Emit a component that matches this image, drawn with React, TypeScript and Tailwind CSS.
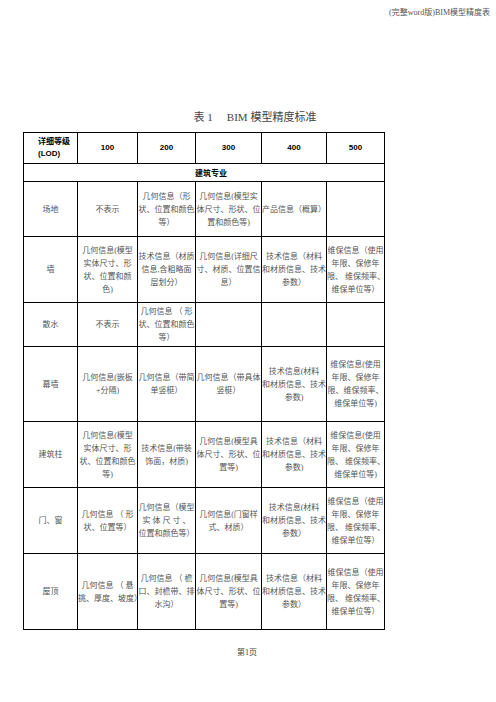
const cols = [54, 60, 58, 66, 65, 58];

const rows: { h: number; cells: string[][] }[] = [
  {
    h: 55,
    cells: [
      ["场地"],
      ["不表示"],
      ["几何信息（形", "状、位置和颜色", "等）"],
      ["几何信息(模型实", "体尺寸、形状、位", "置和颜色等)"],
      ["产品信息（概算）"],
      [],
    ],
  },
  {
    h: 66,
    cells: [
      ["墙"],
      ["几何信息(模型", "实体尺寸、形", "状、位置和颜", "色)"],
      ["技术信息（材质", "信息,含粗略面", "层划分）"],
      ["几何信息(详细尺", "寸、材质、位置信", "息）"],
      ["技术信息（材料", "和材质信息、技术", "参数）"],
      ["维保信息（使用", "年限、保修年", "限、 维保频率、", "维保单位等）"],
    ],
  },
  {
    h: 44,
    cells: [["散水"], ["不表示"], ["几何信息 （ 形", "状、位置和颜色", "等）"], [], [], []],
  },
  {
    h: 75,
    cells: [
      ["幕墙"],
      ["几何信息(嵌板", "+分隔)"],
      ["几何信息（带简", "单竖梃）"],
      ["几何信息（带具体", "竖梃）"],
      ["技术信息(材料", "和材质信息、技术", "参数)"],
      ["维保信息(使用", "年限、保修年", "限、维保频率、", "维保单位等)"],
    ],
  },
  {
    h: 66,
    cells: [
      ["建筑柱"],
      ["几何信息(模型", "实体尺寸、形", "状、位置和颜色", "等)"],
      ["技术信息(带装", "饰面，材质)"],
      ["几何信息(模型具", "体尺寸、形状、位", "置等)"],
      ["技术信息（材料", "和材质信息、技术", "参数)"],
      ["维保信息(使用", "年限、保修年", "限、 维保频率、", "维保单位等)"],
    ],
  },
  {
    h: 66,
    cells: [
      ["门、窗"],
      ["几何信息 （ 形", "状、位置等）"],
      ["几何信息（模型", "实 体 尺 寸 、", "位置和颜色等）"],
      ["几何信息(门窗样", "式、材质）"],
      ["技术信息(材料", "和材质信息、技术", "参数）"],
      ["维保信息（使用", "年限、保修年", "限、 维保频率、", "维保单位等）"],
    ],
  },
  {
    h: 76,
    cells: [
      ["屋顶"],
      ["几何信息 （ 悬", "挑、厚度、坡度）"],
      ["几何信息 （ 檐", "口、封檐带、排", "水沟）"],
      ["几何信息(模型具", "体尺寸、形状、位", "置等)"],
      ["技术信息（材料", "和材质信息、技术", "参数）"],
      ["维保信息（使用", "年限、保修年", "限、 维保频率、", "维保单位等）"],
    ],
  },
];

const cjk = "font-['Liberation_Serif','Noto_Sans_CJK_SC',serif]";

export default function App() {
  return (
    <div className={`w-[496px] h-[702px] bg-white flex flex-col text-[#555] ${cjk}`}>
      {/* page header */}
      <div className="h-[8px]" />
      <div className="self-end pr-[6px] text-[8px] leading-[10px] text-[#555]">(完整word版)BIM模型精度表</div>

      {/* title */}
      <div className="mt-[92px] flex justify-center gap-[14px] text-[11px] leading-[14px] text-[#444] pl-[14px]">
        <span>表 1</span>
        <span>BIM 模型精度标准</span>
      </div>

      <table className="mt-[8px] ml-[23px] table-fixed border-collapse w-[361px]">
        <colgroup>
          {cols.map((w, i) => (
            <col key={i} style={{ width: w }} />
          ))}
        </colgroup>
        <tbody>
          <tr className="h-[31px] font-['Liberation_Sans','Noto_Sans_CJK_SC',sans-serif] font-bold text-[8px] text-black">
            <td className="border border-black pl-[14px] leading-[12px] align-middle">
              详细等级
              <br />
              (LOD)
            </td>
            {["100", "200", "300", "400", "500"].map((t) => (
              <td key={t} className="border border-black text-center align-middle">
                {t}
              </td>
            ))}
          </tr>
          <tr className="h-[18px]">
            <td
              colSpan={6}
              className="border border-black text-center align-middle font-bold text-[8px] text-black pl-[14px] font-['Noto_Sans_CJK_SC',sans-serif]"
            >
              建筑专业
            </td>
          </tr>
          {rows.map((r, ri) => (
            <tr key={ri} style={{ height: r.h }}>
              {r.cells.map((lines, ci) => (
                <td key={ci} className="border border-black align-middle text-center text-[8px] leading-[13px] px-0">
                  {lines.map((l, li) => (
                    <div key={li} className="whitespace-nowrap overflow-visible">
                      {l}
                    </div>
                  ))}
                </td>
              ))}
            </tr>
          ))}
        </tbody>
      </table>

      <div className="mt-[18px] text-center text-[8px] leading-[10px] text-[#444] pr-[2px]">第1页</div>
    </div>
  );
}
